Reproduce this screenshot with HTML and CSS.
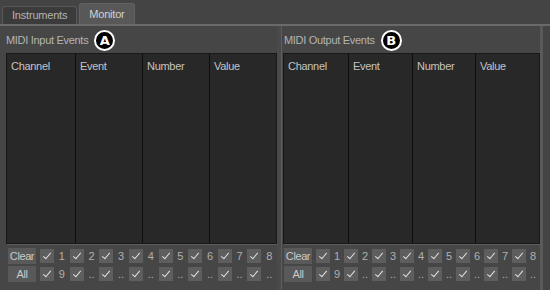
FILE: index.html
```html
<!DOCTYPE html>
<html lang="en">
<head>
    <meta charset="UTF-8">
    <title>Monitor</title>
    <link rel="stylesheet" href="styles.css">
</head>
<body>
    <!-- Tab strip -->
    <div class="tabs">
        <div class="tab">Instruments</div>
        <div class="tab active">Monitor</div>
    </div>

    <div class="pane">
        <!-- Input side -->
        <div class="side side-in">
            <div class="caption">MIDI Input Events <span class="badge">A</span></div>
            <div class="frame">
                <div class="events">
                    <div class="col">Channel</div>
                    <div class="col">Event</div>
                    <div class="col">Number</div>
                    <div class="col">Value</div>
                </div>
            </div>
            <div class="controls">
                <button class="btn">Clear</button>
                <span class="chk"></span><span class="num">1</span>
                <span class="chk"></span><span class="num">2</span>
                <span class="chk"></span><span class="num">3</span>
                <span class="chk"></span><span class="num">4</span>
                <span class="chk"></span><span class="num">5</span>
                <span class="chk"></span><span class="num">6</span>
                <span class="chk"></span><span class="num">7</span>
                <span class="chk"></span><span class="num">8</span>
                <button class="btn">All</button>
                <span class="chk"></span><span class="num">9</span>
                <span class="chk"></span><span class="num">..</span>
                <span class="chk"></span><span class="num">..</span>
                <span class="chk"></span><span class="num">..</span>
                <span class="chk"></span><span class="num">..</span>
                <span class="chk"></span><span class="num">..</span>
                <span class="chk"></span><span class="num">..</span>
                <span class="chk"></span><span class="num">..</span>
            </div>
        </div>

        <div class="splitter"></div>

        <!-- Output side -->
        <div class="side side-out">
            <div class="caption">MIDI Output Events <span class="badge">B</span></div>
            <div class="frame">
                <div class="events">
                    <div class="col">Channel</div>
                    <div class="col">Event</div>
                    <div class="col">Number</div>
                    <div class="col">Value</div>
                </div>
            </div>
            <div class="controls">
                <button class="btn">Clear</button>
                <span class="chk"></span><span class="num">1</span>
                <span class="chk"></span><span class="num">2</span>
                <span class="chk"></span><span class="num">3</span>
                <span class="chk"></span><span class="num">4</span>
                <span class="chk"></span><span class="num">5</span>
                <span class="chk"></span><span class="num">6</span>
                <span class="chk"></span><span class="num">7</span>
                <span class="chk"></span><span class="num">8</span>
                <button class="btn">All</button>
                <span class="chk"></span><span class="num">9</span>
                <span class="chk"></span><span class="num">..</span>
                <span class="chk"></span><span class="num">..</span>
                <span class="chk"></span><span class="num">..</span>
                <span class="chk"></span><span class="num">..</span>
                <span class="chk"></span><span class="num">..</span>
                <span class="chk"></span><span class="num">..</span>
                <span class="chk"></span><span class="num">..</span>
            </div>
        </div>
    </div>
</body>
</html>
```

FILE: styles.css
```css
body {
    margin: 0;
    width: 550px;
    height: 290px;
    overflow: hidden;
    background-color: #444444;
    font-family: "Liberation Sans", Arial, sans-serif;
    font-size: 11px;
    color: #b8b8b8;
}

/* Tab strip */
.tabs {
    display: flex;
    align-items: flex-end;
    height: 26px;
    padding-left: 2px;
    border-bottom: 2px solid #6a6a6a;
    box-sizing: border-box;
}

.tab {
    height: 17px;
    padding: 0 9px;
    margin-right: 2px;
    line-height: 17px;
    background-color: #3b3b3b;
    border: 1px solid #575757;
    border-bottom: none;
    border-radius: 3px 3px 0 0;
    color: #b4b4b4;
    letter-spacing: -0.2px;
}

.tab.active {
    height: 20px;
    line-height: 20px;
    background-color: #585858;
    border-color: #626262;
    color: #d2d2d2;
}

/* Main pane */
.pane {
    display: flex;
    height: 264px;
    width: 543px;
    box-sizing: border-box;
    border-right: 3px solid #5a5a5a;
    background-color: #464646;
}

.side {
    display: flex;
    flex-direction: column;
}

.side-in {
    width: 271px;
    padding-left: 6px;
}

.side-out {
    width: 257px;
}

.splitter {
    width: 6px;
    background: linear-gradient(90deg, #4a4a4a 0, #4a4a4a 4px, #5e5e5e 4px, #5e5e5e 5px, #464646 5px);
}

.caption {
    height: 27px;
    display: flex;
    align-items: center;
    padding-top: 1px;
    box-sizing: border-box;
    color: #b4b4b4;
    letter-spacing: -0.3px;
}

.side-out .caption {
    padding-left: 1px;
}

.badge {
    display: inline-flex;
    justify-content: center;
    align-items: center;
    width: 17px;
    height: 17px;
    margin-left: 6px;
    border: 2px solid #ffffff;
    border-radius: 50%;
    background-color: #000000;
    color: #ffffff;
    font-family: "DejaVu Sans", sans-serif;
    font-weight: bold;
    font-size: 13px;
    letter-spacing: 0;
}

/* Event tables */
.frame {
    height: 191px;
    box-shadow: 1px 1px 0 #5c5c5c;
}

.events {
    display: grid;
    grid-template-columns: 68px 67px 67px 1fr;
    height: 100%;
    box-sizing: border-box;
    border: 1px solid #181818;
    background-color: #282828;
}

.side-out .events {
    grid-template-columns: 64px 64px 63px 1fr;
}

.col {
    padding: 6px 4px;
    border-left: 1px solid #0e0e0e;
    color: #c4c4c4;
    letter-spacing: -0.3px;
}

.col:first-child {
    border-left: none;
}

/* Channel filter controls */
.controls {
    display: grid;
    grid-template-columns: 32px repeat(8, 14px 1fr);
    grid-auto-rows: 16px;
    row-gap: 2px;
    align-items: center;
    margin-top: 4px;
    padding-left: 2px;
}

.side-out .controls {
    padding-left: 1px;
    width: 256px;
}

.btn {
    height: 16px;
    margin: 0;
    padding: 0;
    width: 28px;
    border: none;
    background-color: #595959;
    color: #cacaca;
    font-family: inherit;
    font-size: 11px;
    letter-spacing: -0.4px;
    grid-column: 1;
    justify-self: start;
}

.chk {
    position: relative;
    width: 14px;
    height: 14px;
    background-color: #5e5e5e;
}

.chk::after {
    content: "";
    position: absolute;
    left: 5px;
    top: 2px;
    width: 3px;
    height: 7px;
    border-right: 1.5px solid #e2e2e2;
    border-bottom: 1.5px solid #e2e2e2;
    transform: rotate(40deg);
}

.num {
    text-align: center;
    color: #b0b0b0;
}
```
